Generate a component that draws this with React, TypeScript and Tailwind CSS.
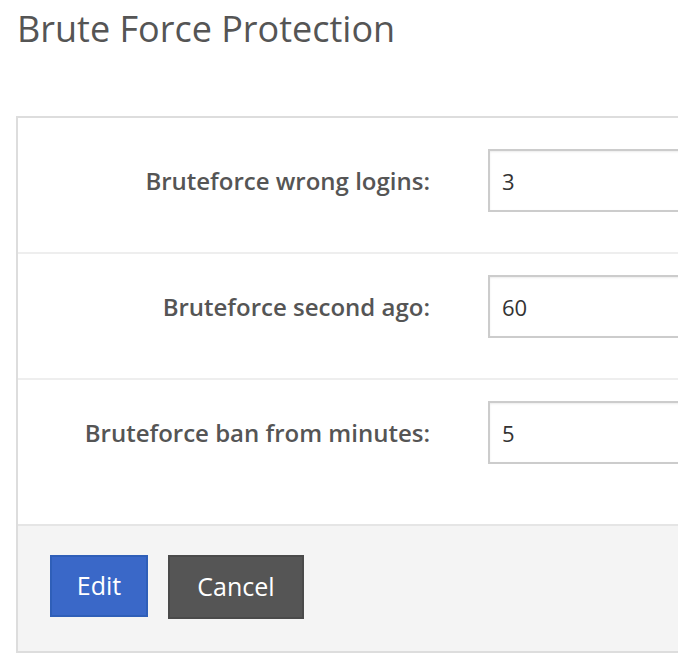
import React, { useState } from 'react';

type Field = {
  id: string;
  label: string;
  value: string;
};

const initialFields: Field[] = [
  { id: 'wrongLogins', label: 'Bruteforce wrong logins:', value: '3' },
  { id: 'secondAgo', label: 'Bruteforce second ago:', value: '60' },
  { id: 'banMinutes', label: 'Bruteforce ban from minutes:', value: '5' },
];

const App: React.FC = () => {
  const [fields, setFields] = useState<Field[]>(initialFields);

  const updateField = (id: string, value: string) => {
    setFields(prev => prev.map(f => (f.id === id ? { ...f, value } : f)));
  };

  return (
    <div className="min-h-screen w-[678px] overflow-hidden bg-white font-['Open_Sans',sans-serif] text-[#555]">
      <h1 className="pl-[17px] pt-[5px] text-[36px] leading-[48px] font-normal text-[#555]">Brute Force Protection</h1>

      <div className="mt-[63px] ml-[16px] w-[800px] border-2 border-[#ddd] bg-white">
        <div className="pt-[10px] pb-[20px]">
          {fields.map((field, index) => (
            <div
              key={field.id}
              className={`flex items-center pt-[21px] pb-[40px] ${index > 0 ? 'border-t-2 border-[#eee]' : ''}`}
            >
              <label
                htmlFor={field.id}
                className="w-[412px] shrink-0 text-right text-[24px] font-semibold text-[#555]"
              >
                {field.label}
              </label>
              <input
                id={field.id}
                value={field.value}
                onChange={e => updateField(field.id, e.target.value)}
                className="ml-[58px] h-[63px] w-[330px] border-2 border-[#ccc] bg-white px-[12px] text-[22px] text-[#333] shadow-[inset_0_1px_2px_rgba(0,0,0,0.08)] outline-none"
              />
            </div>
          ))}
        </div>

        <div className="flex items-start gap-[20px] border-t-2 border-[#e5e5e5] bg-[#f4f4f4] px-[32px] pt-[29px] pb-[32px]">
          <button className="h-[62px] w-[98px] border-2 border-[#2f5fb8] bg-[#3a68c8] text-[25px] text-white">
            Edit
          </button>
          <button className="h-[64px] w-[136px] border-2 border-[#4a4a4a] bg-[#555] text-[25px] text-white">
            Cancel
          </button>
        </div>
      </div>
    </div>
  );
};

export default App;
